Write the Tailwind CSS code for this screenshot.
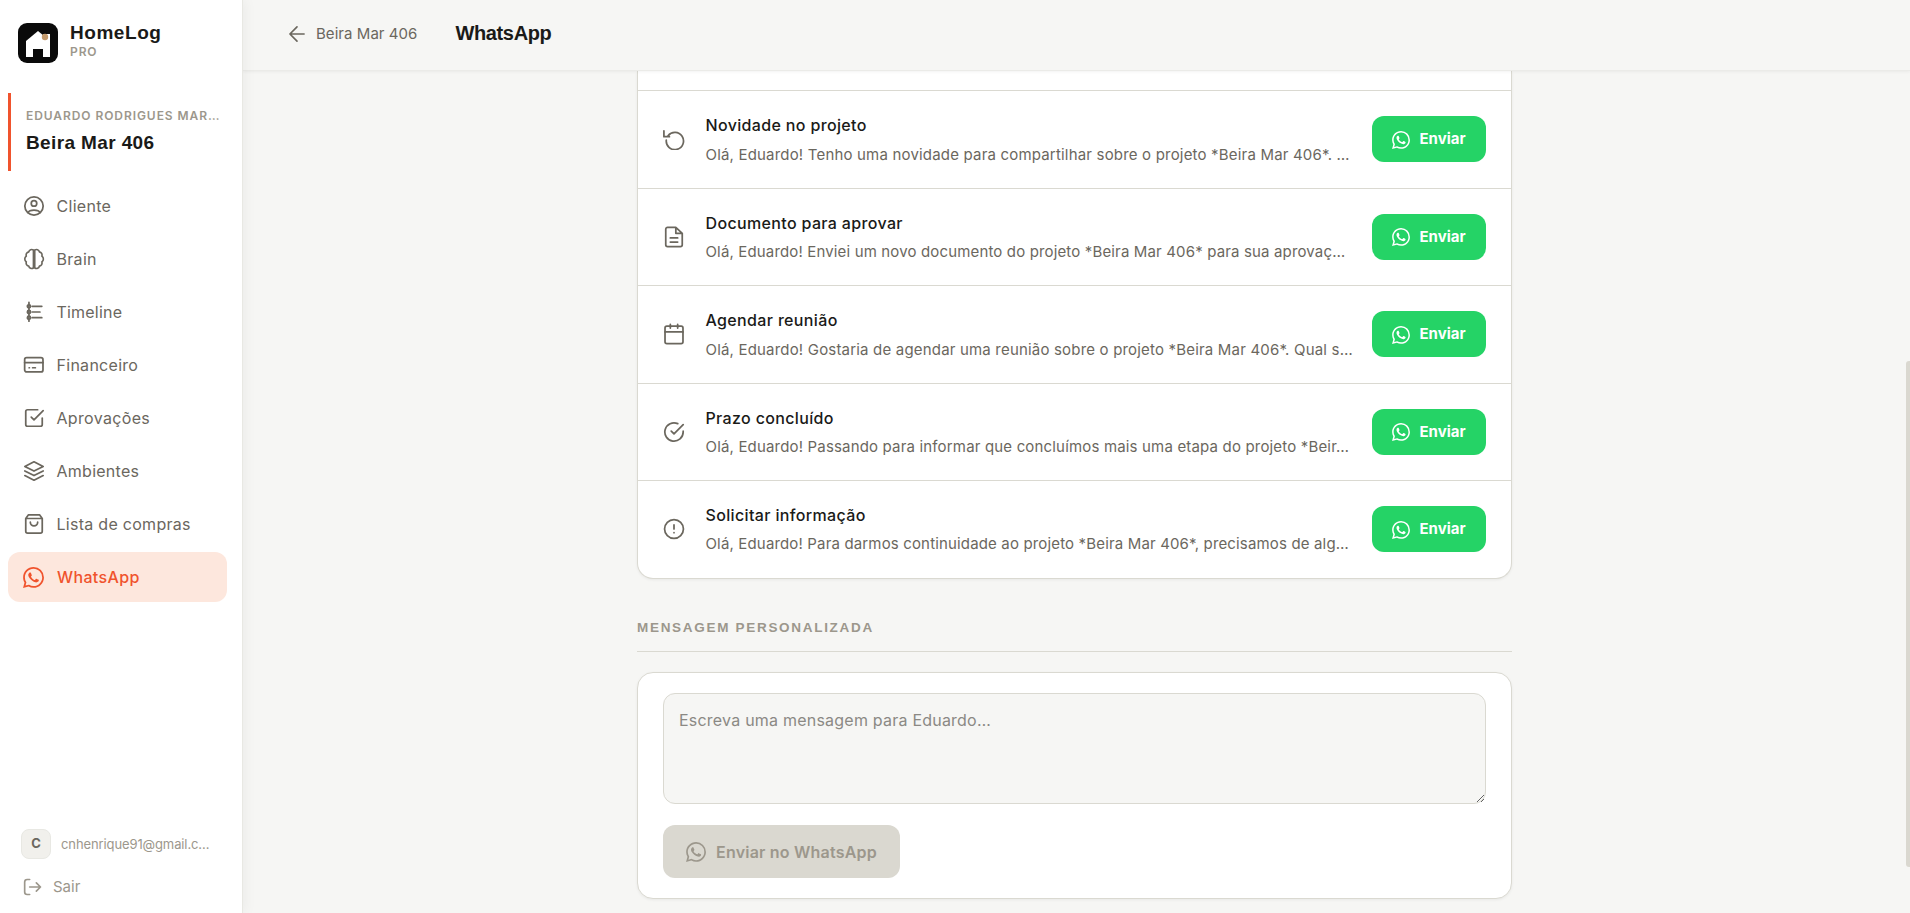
<!DOCTYPE html>
<html lang="pt-BR">
<head>
<meta charset="utf-8">
<title>HomeLog PRO</title>
<script src="https://cdn.jsdelivr.net/npm/@tailwindcss/browser@4"></script>
</head>
<body class="h-screen overflow-hidden bg-[#f6f6f4] font-[Inter,sans-serif] text-base text-[#1a1a18]">
<svg class="hidden">
  <symbol id="wa" viewBox="0 0 24 24"><path fill="currentColor" d="M17.472 14.382c-.297-.149-1.758-.867-2.03-.967-.273-.099-.471-.148-.67.15-.197.297-.767.966-.94 1.164-.173.199-.347.223-.644.075-.297-.15-1.255-.463-2.39-1.475-.883-.788-1.48-1.761-1.653-2.059-.173-.297-.018-.458.13-.606.134-.133.298-.347.446-.52.149-.174.198-.298.298-.497.099-.198.05-.371-.025-.52-.075-.149-.669-1.612-.916-2.207-.242-.579-.487-.5-.669-.51-.173-.008-.371-.01-.57-.01-.198 0-.52.074-.792.372-.272.297-1.04 1.016-1.04 2.479 0 1.462 1.065 2.875 1.213 3.074.149.198 2.096 3.2 5.077 4.487.709.306 1.262.489 1.694.625.712.227 1.36.195 1.871.118.571-.085 1.758-.719 2.006-1.413.248-.694.248-1.289.173-1.413-.074-.124-.272-.198-.57-.347m-5.421 7.403h-.004a9.87 9.87 0 01-5.031-1.378l-.361-.214-3.741.982.998-3.648-.235-.374a9.86 9.86 0 01-1.51-5.26c.001-5.45 4.436-9.884 9.888-9.884 2.64 0 5.122 1.03 6.988 2.898a9.825 9.825 0 012.893 6.994c-.003 5.45-4.437 9.884-9.885 9.884m8.413-18.297A11.815 11.815 0 0012.05 0C5.495 0 .16 5.335.157 11.892c0 2.096.547 4.142 1.588 5.945L.057 24l6.305-1.654a11.882 11.882 0 005.683 1.448h.005c6.554 0 11.89-5.335 11.893-11.893a11.821 11.821 0 00-3.48-8.413z"/></symbol>
</svg>
<div class="flex h-full">
  <aside class="relative z-20 flex h-full w-[243px] shrink-0 flex-col border-r border-[#e8e8e3] bg-white shadow-[2px_0_12px_rgba(0,0,0,0.05)]">
    <div class="flex h-[86px] items-center gap-[12px] pl-[18px]">
      <svg class="size-10" viewBox="0 0 40 40"><rect width="40" height="40" rx="9" fill="#0a0a0a"/><path d="M20 8 32 18v16H8V18z" fill="#fff"/><path d="M25 12.200V11h7v8h-1z" fill="#fff"/><rect x="15" y="26" width="10" height="8.200" fill="#0a0a0a"/><circle cx="27" cy="14" r="3.200" fill="#c49a6c"/></svg>
      <div class="pb-[5px]">
        <div class="font-['Liberation_Sans',sans-serif] text-[19px] leading-[22px] font-bold tracking-[0.550px]">HomeLog</div>
        <div class="text-[12px] leading-4 font-semibold tracking-[0.900px] text-[#9c978c]">PRO</div>
      </div>
    </div>
    <div class="mt-[7px] ml-2 h-[78px] border-l-[3px] border-[#f0532d] pt-[14px] pl-[15px] whitespace-nowrap">
      <div class="text-[12px] leading-[18px] font-semibold tracking-[0.930px] text-[#9c978c]">EDUARDO RODRIGUES MAR…</div>
      <div class="mt-[6px] font-['Liberation_Sans',sans-serif] text-[19px] leading-6 font-bold tracking-[0.380px]">Beira Mar 406</div>
    </div>
    <nav class="mt-[10px] flex flex-col gap-[3px] pr-[15px] pl-2 text-[#6b675e]">
      <a class="flex h-[50px] items-center gap-3 pl-[14.500px]"><svg class="size-[22px] fill-none stroke-current stroke-[1.900] [stroke-linecap:round]" viewBox="0 0 24 24"><circle cx="12" cy="12" r="10"/><circle cx="12" cy="9.200" r="3"/><path d="M5.500 19.200c1-2.200 3.200-2.700 6.500-2.700s5.500.5 6.500 2.700"/></svg><span class="tracking-[0.300px]">Cliente</span></a>
      <a class="flex h-[50px] items-center gap-3 pl-[14.500px]"><svg class="size-[22px] fill-none stroke-current stroke-[1.800] [stroke-linecap:round] [stroke-linejoin:round]" viewBox="0 0 24 24"><path d="M11.400 2.200C9.300 1 7 1.800 6.300 4.200 4 4.700 3 6.800 3.600 8.900 1.400 10.500 1.400 13.500 3.600 15.100 3 17.200 4 19.300 6.300 19.800 7 22.200 9.300 23 11.400 21.800M12.800 2.200c2.100-1.200 4.400-.4 5.100 2 2.300.5 3.300 2.600 2.700 4.700 2.200 1.600 2.200 4.600 0 6.200.6 2.100-.4 4.200-2.700 4.700-.7 2.400-3 3.200-5.100 2M11.400 2.500v19M12.800 2.500v19"/></svg><span class="tracking-[0.300px]">Brain</span></a>
      <a class="flex h-[50px] items-center gap-3 pl-[14.500px]"><svg class="size-[22px] fill-none stroke-current stroke-[1.900] [stroke-linecap:round]" viewBox="0 0 24 24"><path d="M6.500 1.500v20.500M10 5.800h10.500M10 12h8.500M10 18.200h10.500"/><circle cx="6.500" cy="5.800" r="1.700"/><circle cx="6.500" cy="12" r="1.700"/><circle cx="6.500" cy="18.200" r="1.700"/></svg><span class="tracking-[0.200px]">Timeline</span></a>
      <a class="flex h-[50px] items-center gap-3 pl-[14.500px]"><svg class="size-[22px] fill-none stroke-current stroke-[1.900] [stroke-linecap:round]" viewBox="0 0 24 24"><rect x="1.800" y="4" width="20" height="15.600" rx="2.200"/><path d="M1.800 9.300h20M6.700 15h.3M10.500 15h3"/></svg><span class="tracking-[0.280px]">Financeiro</span></a>
      <a class="flex h-[50px] items-center gap-3 pl-[14.500px]"><svg class="size-[22px] fill-none stroke-current stroke-[1.900] [stroke-linecap:round] [stroke-linejoin:round]" viewBox="0 0 24 24"><path d="m9 11 3 3L22 4M21 12v7a2 2 0 0 1-2 2H5a2 2 0 0 1-2-2V5a2 2 0 0 1 2-2h11"/></svg><span class="tracking-[0.330px]">Aprovações</span></a>
      <a class="flex h-[50px] items-center gap-3 pl-[14.500px]"><svg class="size-[22px] fill-none stroke-current stroke-[1.900] [stroke-linecap:round] [stroke-linejoin:round]" viewBox="0 0 24 24"><path d="M12 2 2 7l10 5 10-5zM2 17l10 5 10-5M2 12l10 5 10-5"/></svg><span class="tracking-[0.260px]">Ambientes</span></a>
      <a class="flex h-[50px] items-center gap-3 pl-[14.500px]"><svg class="size-[22px] fill-none stroke-current stroke-[1.900] [stroke-linecap:round] [stroke-linejoin:round]" viewBox="0 0 24 24"><path d="M6 2 3 6v14a2 2 0 0 0 2 2h14a2 2 0 0 0 2-2V6l-3-4zM3 6h18M16 10a4 4 0 0 1-8 0"/></svg><span class="tracking-[0.280px]">Lista de compras</span></a>
      <a class="flex h-[50px] items-center gap-[13px] rounded-xl bg-[#fde7dd] pl-[15px] font-medium text-[#f0532d]"><svg class="size-[21px]"><use href="#wa"/></svg><span class="tracking-[0.360px]">WhatsApp</span></a>
    </nav>
    <div class="mt-auto mb-[14px] pl-[21px] text-[#9c978c]">
      <div class="flex items-center gap-[10px]"><span class="flex size-[30px] items-center justify-center rounded-lg border border-[#e8e8e3] bg-[#f1f0ec] text-[13px] font-bold text-[#6b675e]">C</span><span class="pt-px text-[13px] tracking-[-0.110px]">cnhenrique91@gmail.c…</span></div>
      <div class="mt-4 flex h-6 items-center gap-[10px] pl-[2px]"><svg class="size-5 fill-none stroke-current stroke-2 [stroke-linecap:round] [stroke-linejoin:round]" viewBox="0 0 24 24"><path d="M8 21H5a3 3 0 0 1-3-3V6a3 3 0 0 1 3-3h3M16 17l5-5-5-5M21 12H8"/></svg><span class="text-[15px]">Sair</span></div>
    </div>
  </aside>
  <main class="flex min-w-0 flex-1 flex-col">
    <header class="relative z-10 flex h-[71px] shrink-0 items-center border-b border-[#ebebe8] bg-[#f6f6f4] pb-[3px] pl-[44px] shadow-[0_1px_3px_rgba(0,0,0,0.05)]">
      <svg class="mr-[9px] size-5 fill-none stroke-[#6b675e] stroke-2 [stroke-linecap:round] [stroke-linejoin:round]" viewBox="0 0 24 24"><path d="M20.500 12H3.500M12 20.500 3.500 12 12 3.500"/></svg>
      <span class="pt-px text-[15px] tracking-[0.050px] text-[#6b675e]">Beira Mar 406</span>
      <h1 class="ml-[38px] pb-[2px] font-['Liberation_Sans',sans-serif] text-[20px] leading-6 font-bold tracking-[-0.360px]">WhatsApp</h1>
    </header>
    <div class="relative flex min-h-0 flex-1 justify-center overflow-hidden pr-[4px]">
      <div class="w-[875px]">
        <section class="h-[508px] rounded-b-2xl border border-t-0 border-[#dad9d1] bg-white shadow-[0_1px_3px_rgba(0,0,0,0.06)]">
          <div class="h-5 border-b border-[#dad9d1]"></div>
          <div id="rows" class="divide-y divide-[#dad9d1]"></div>
        </section>
        <h2 class="mt-[38px] border-b border-[#dad9d1] pb-[13px] font-['Liberation_Sans',sans-serif] text-[13.500px] leading-[21px] font-bold tracking-[1.700px] text-[#9c978c]">MENSAGEM PERSONALIZADA</h2>
        <section class="mt-5 h-[227px] rounded-2xl border border-[#dad9d1] bg-white px-[25px] pt-5 shadow-[0_1px_3px_rgba(0,0,0,0.06)]">
          <textarea class="block h-[111px] w-full resize rounded-xl border border-[#dad9d1] bg-[#f6f6f4] px-[15px] py-[13px] leading-[26px] tracking-[0.220px] placeholder:text-[#8b8984]" placeholder="Escreva uma mensagem para Eduardo…"></textarea>
          <button class="mt-[21px] flex h-[53px] w-[237px] items-center gap-[10px] rounded-xl bg-[#dad8d0] pl-[23px] font-semibold tracking-[0.210px] whitespace-nowrap text-[#9c978c]"><svg class="size-5"><use href="#wa"/></svg>Enviar no WhatsApp</button>
        </section>
      </div>
      <div class="absolute top-[290px] right-0 h-[506px] w-1 rounded-l-[3px] bg-[#dad8d0]"></div>
    </div>
  </main>
</div>
<script>
const rows = [
  ["Novidade no projeto", "Olá, Eduardo! Tenho uma novidade para compartilhar sobre o projeto *Beira Mar 406*. …", "tracking-[0.185px]", '<path d="M1 3v6.500h6M3.600 13.300A9.400 9.400 0 1 0 5.500 8.500"/>'],
  ["Documento para aprovar", "Olá, Eduardo! Enviei um novo documento do projeto *Beira Mar 406* para sua aprovaç…", "tracking-[0.150px]", '<path d="M14 1.500H5a2 2 0 0 0-2 2v17a2 2 0 0 0 2 2h14a2 2 0 0 0 2-2V8zM14 1.500V8h7M8 13h8M8 17.500h8"/>'],
  ["Agendar reunião", "Olá, Eduardo! Gostaria de agendar uma reunião sobre o projeto *Beira Mar 406*. Qual s…", "tracking-[0.185px]", '<rect x="2.200" y="3.500" width="19.600" height="19" rx="2"/><path d="M16 1.500v4M8 1.500v4M2.200 9.700h19.600"/>'],
  ["Prazo concluído", "Olá, Eduardo! Passando para informar que concluímos mais uma etapa do projeto *Beir…", "tracking-[0.170px]", '<path d="M22 11.080V12a10 10 0 1 1-5.930-9.140M22 4 12 14.010l-3-3"/>'],
  ["Solicitar informação", "Olá, Eduardo! Para darmos continuidade ao projeto *Beira Mar 406*, precisamos de alg…", "tracking-[0.155px]", '<circle cx="12" cy="12" r="10.300"/><path d="M12 7.500v4.500M12 16h.01"/>']
];
document.getElementById('rows').innerHTML = rows.map(([title, text, tracking, icon]) => `
  <div class="flex h-[97.500px] items-center px-[25px] last:h-[96px]">
    <svg class="size-[22px] shrink-0 fill-none stroke-[#6b675e] stroke-[1.900] [stroke-linecap:round] [stroke-linejoin:round]" viewBox="0 0 24 24">${icon}</svg>
    <div class="ml-5 min-w-0 flex-1 pt-[1px] pl-[0.500px] whitespace-nowrap">
      <div class="leading-[26px] font-medium tracking-[0.350px]">${title}</div>
      <div class="mt-[3.500px] text-[15px] leading-[26px] text-[#6b675e] ${tracking}">${text}</div>
    </div>
    <button class="flex h-[46px] w-[114px] shrink-0 items-center gap-[10px] rounded-xl bg-[#25d366] pl-[19.500px] text-[15px] font-bold text-white"><svg class="mt-px size-[18px]"><use href="#wa"/></svg>Enviar</button>
  </div>`).join('');
</script>
</body>
</html>
